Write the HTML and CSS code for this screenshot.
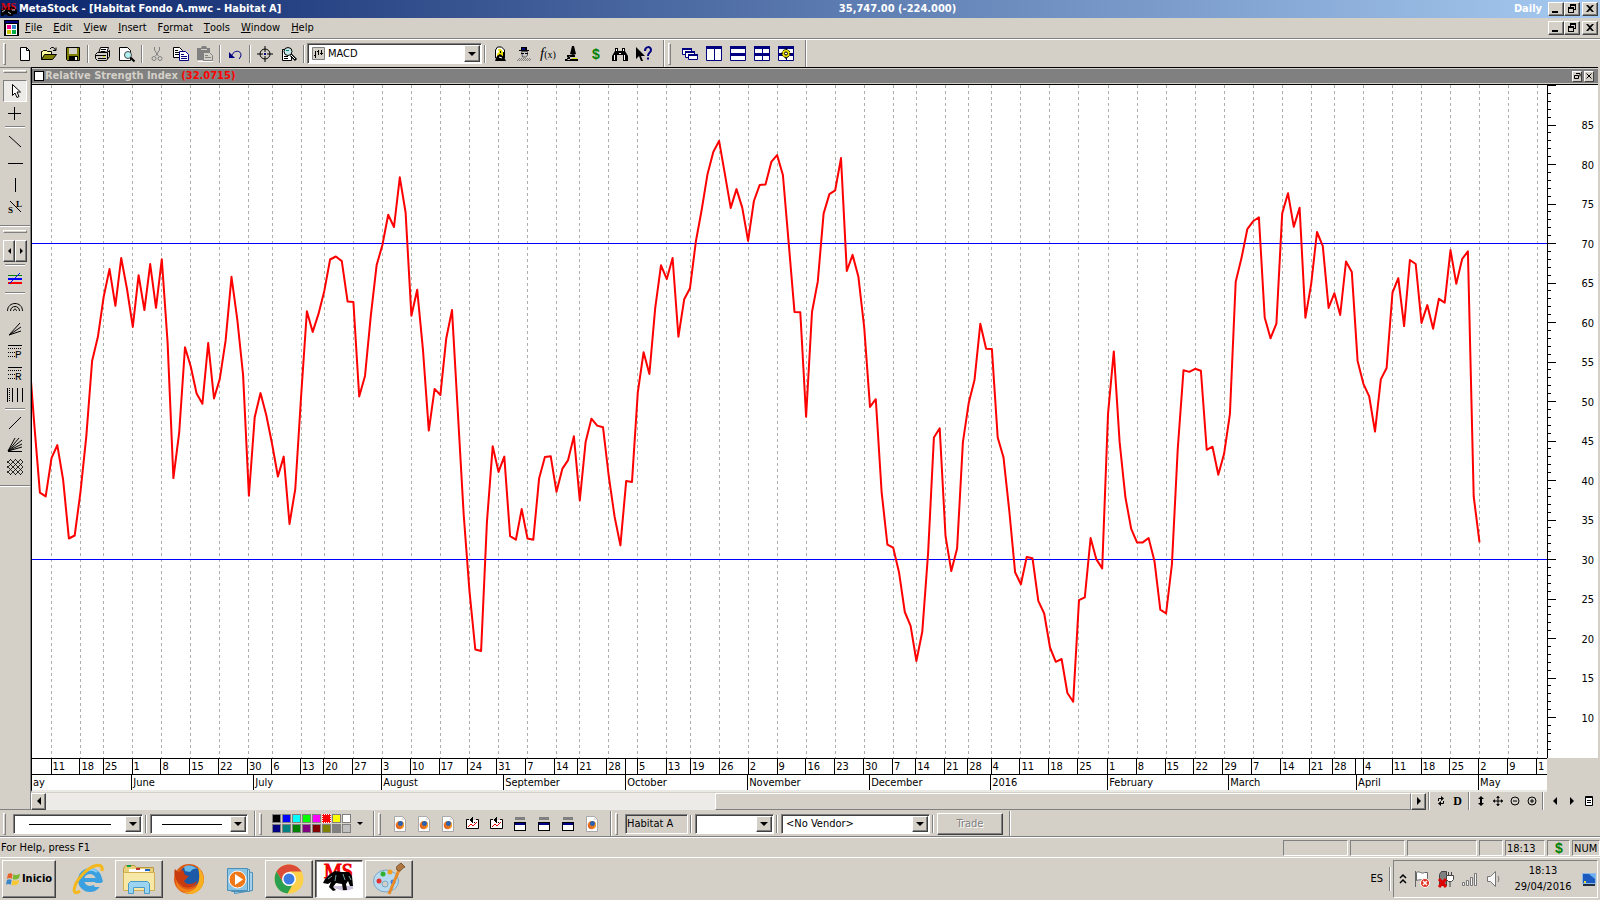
FILE: index.html
```html
<!DOCTYPE html>
<html lang="en">
<head>
<meta charset="utf-8">
<title>MetaStock - [Habitat Fondo A.mwc - Habitat A]</title>
<link rel="stylesheet" href="styles.css">
</head>
<body>
<svg class="defs" aria-hidden="true">
  <symbol id="i-min" viewBox="0 0 12 10"><path fill="#000" d="M2 7h6v2H2z"/></symbol>
  <symbol id="i-restore" viewBox="0 0 12 10"><path fill="#000" fill-rule="evenodd" d="M4 0h6v6H8v3H2V3h2zM5 2v1h3v2h1V2zM3 5v3h4V5z"/></symbol>
  <symbol id="i-close" viewBox="0 0 12 10"><path fill="#000" d="M2 1h2l2 2 2-2h2L7 4.500l3 3.500H8L6 6 4 8H2l3-3.500z"/></symbol>
  <symbol id="i-fox" viewBox="0 0 16 16"><path fill="#fff" stroke="#a8a8a8" d="M2.500.5h8l3 3v12h-11z"/><path fill="#ddd" d="M10 1l3 3h-3z"/><circle cx="8" cy="9" r="4" fill="#e8701a"/><circle cx="8.500" cy="7.500" r="2.500" fill="#2a62b0"/><path fill="#f8b030" d="M11 6c2 3 0 7-3 7 2-1 3-3 3-7z"/><path fill="#c8361a" d="M4 7c0 4 2 6 5 6-3 1-6-2-5-6z"/></symbol>
  <symbol id="i-chart" viewBox="0 0 16 16"><path fill="#fff" d="M3 4h11v9H3z"/><path fill="none" stroke="#000" d="M5 3.500H2.500v9h12v-9H12"/><path fill="none" stroke="#e00000" d="M4 11l3-3 2 2 4-4"/><path fill="#000" d="M8 1h1v6H8zM6 3h1v2H6zM7 2h1v4H7zM10 6h1v1h-1z"/></symbol>
  <symbol id="i-win" viewBox="0 0 16 16"><path fill="#808080" d="M3 1h10v3H3z"/><path fill="#d4d0c8" d="M4 4h8v2H4z"/><path fill="#000" d="M2 6h12v9H2z"/><path fill="#000080" d="M3 7h10v2H3z"/><path fill="#fff" d="M3 9h10v5H3z"/></symbol>
</svg>

<div class="app">
  <header class="titlebar">
    <div class="caption">
      <svg class="ms-small" viewBox="0 0 18 16" aria-hidden="true"><path d="M1 9l4-3 8 0 4 3v4h-3l-2 2H8l-2-2-3 2H1z" fill="#000"/><text x="1" y="9" class="ms-mark-s">MS</text><path d="M2 11l3-2M8 11l3 2M12 9h3" stroke="#c8c8d8"/></svg>
      <span>MetaStock - [Habitat Fondo A.mwc - Habitat A]</span>
    </div>
    <span class="quote">35,747.00 (-224.000)</span>
    <div class="caption-end">
      <span class="period">Daily</span>
      <div class="winbtns">
        <button class="wb" aria-label="Minimize"><svg><use href="#i-min"/></svg></button><button class="wb" aria-label="Restore"><svg><use href="#i-restore"/></svg></button><button class="wb wb-close" aria-label="Close"><svg><use href="#i-close"/></svg></button>
      </div>
    </div>
  </header>

  <nav class="menubar">
    <svg class="doc-icon" viewBox="0 0 15 16" aria-hidden="true"><path d="M0 0h15v16H0z" fill="#000"/><path d="M1 1h13v2H1z" fill="#000080"/><path d="M2 4h11v11H2z" fill="#fff"/><path d="M3 5h4v4H3z" fill="#f08"/><path d="M8 5h4v4H8z" fill="#38c"/><path d="M3 10h4v4H3z" fill="#c8c800"/><path d="M8 10h4v4H8z" fill="#0a4"/></svg>
    <button class="menu"><u>F</u>ile</button><button class="menu"><u>E</u>dit</button><button class="menu"><u>V</u>iew</button><button class="menu"><u>I</u>nsert</button><button class="menu">F<u>o</u>rmat</button><button class="menu"><u>T</u>ools</button><button class="menu"><u>W</u>indow</button><button class="menu"><u>H</u>elp</button>
    <div class="winbtns push">
      <button class="wb" aria-label="Minimize document"><svg><use href="#i-min"/></svg></button><button class="wb" aria-label="Restore document"><svg><use href="#i-restore"/></svg></button><button class="wb wb-close" aria-label="Close document"><svg><use href="#i-close"/></svg></button>
    </div>
  </nav>

  <div class="toolbar">
    <div class="bar">
      <i class="grip"></i>
      <button class="tb" aria-label="New"><svg viewBox="0 0 16 16"><path fill="#fff" stroke="#000" d="M3.500 1.500h6l3 3v10h-9z"/><path fill="none" stroke="#000" d="M9.500 1.500v3h3"/></svg></button>
      <button class="tb" aria-label="Open"><svg viewBox="0 0 16 16"><path fill="#ffffa0" stroke="#000" d="M.5 13.500v-8h1l1-1h3l1 1h4v3"/><path fill="#808000" stroke="#000" d="M.5 13.500l3-5h12l-4 5z"/><path fill="none" stroke="#000" d="M9 3l1.500-1.500h2L14.500 4M15 1.500v3h-3"/></svg></button>
      <button class="tb" aria-label="Save"><svg viewBox="0 0 16 16"><path fill="#808000" stroke="#000" d="M1.500 1.500h13v13h-12l-1-1z"/><path fill="#d4d0c8" d="M4 2h8v6H4z"/><path fill="#000" d="M4 10h9v4H4z"/><path fill="#fff" d="M10 11h2v3h-2z"/></svg></button>
      <i class="sep"></i>
      <button class="tb" aria-label="Print"><svg viewBox="0 0 16 16"><path fill="#fff" stroke="#000" d="M3.500 7.500l2-6h8l-2 6"/><path fill="#d4d0c8" stroke="#000" d="M.5 8.500l2-2h10l2-2v6l-3 4h-9l-2-2z"/><path stroke="#000" d="M6 3.500h5M5.500 5.500h5M1 9.500h10M3 12.500h8M12.500 7v6"/><path stroke="#dd0" d="M8 10.500h2"/></svg></button>
      <button class="tb" aria-label="Print preview"><svg viewBox="0 0 16 16"><path fill="#fff" stroke="#000" d="M.5 1.500h8l3 3v10H.5z"/><circle cx="9" cy="9" r="3.500" fill="#b0f0f0" stroke="#444"/><path stroke="#000" stroke-width="2" d="M11.500 11.500l4 4"/></svg></button>
      <i class="sep"></i>
      <button class="tb" aria-label="Cut"><svg viewBox="0 0 16 16"><g fill="none" stroke="#808080"><path d="M5.500 1v3l4 6M10.500 1v3l-4 6"/><circle cx="5" cy="12.500" r="2"/><circle cx="11" cy="12.500" r="2"/></g></svg></button>
      <button class="tb" aria-label="Copy"><svg viewBox="0 0 16 16"><path fill="#fff" stroke="#000" d="M.5 1.500h6l3 3v7h-9z"/><path stroke="#000" d="M2 4.500h3M2 6.500h5M2 8.500h5"/><path fill="#fff" stroke="#000080" d="M6.500 5.500h6l3 3v6h-9z"/><path stroke="#000080" d="M8 8.500h3M8 10.500h6M8 12.500h6"/></svg></button>
      <button class="tb" aria-label="Paste"><svg viewBox="0 0 16 16"><path fill="#808080" d="M0 2h4l1-2h4l1 2h3v12H0z"/><path stroke="#d4d0c8" d="M4 3.500h6"/><path fill="#d4d0c8" stroke="#808080" d="M6.500 6.500h6l3 3v5h-9z"/><path stroke="#808080" d="M8 9.500h3M8 11.500h6"/><path stroke="#fff" d="M1 15.500h15"/></svg></button>
      <i class="sep"></i>
      <button class="tb" aria-label="Undo"><svg viewBox="0 0 16 16"><path fill="#000080" d="M2 6v6h6z"/><path fill="none" stroke="#000080" d="M5 9c2-5 9-5 9 0 0 1-1 3-2 4"/></svg></button>
      <i class="sep"></i>
      <button class="tb" aria-label="Crosshair"><svg viewBox="0 0 16 16"><circle cx="8" cy="8" r="5" fill="none" stroke="#000"/><path stroke="#000" d="M8 0v6M8 10v6M0 8h6M10 8h6"/><path fill="#000080" d="M7 7h2v2H7z"/></svg></button>
      <button class="tb" aria-label="Zoom"><svg viewBox="0 0 16 16"><path fill="#fff" stroke="#000" d="M1.500 3.500h9v11h-9z"/><path stroke="#000" d="M3 10.500h4M3 12.500h4"/><circle cx="7" cy="5.500" r="4" fill="#c8e8e8" stroke="#000"/><path stroke="#088" d="M5 4.500h3"/><path stroke="#000" stroke-width="3" d="M10 9l5 5"/><path stroke="#fff" d="M10 9l4 4"/></svg></button>
      <i class="sep"></i>
      <div class="combo combo-ind">
        <svg class="ind-icon" viewBox="0 0 13 13" aria-hidden="true"><path fill="#d4d0c8" stroke="#808080" d="M.5.5h12v12H.5z"/><path stroke="#000" d="M3.500 4v7M2 8.500h2M6.500 3v5M5 4.500h2M9.500 3v5M8 6.500h3"/></svg>
        <select aria-label="Indicator"><option>MACD</option></select><span class="arrow"></span>
      </div>
      <i class="sep"></i>
      <button class="tb" aria-label="Expert advisor"><svg viewBox="0 0 16 16"><path fill="#fff" stroke="#000" d="M3.500 12V4l2-3h4l3 3v8z"/><path fill="#e8e000" d="M6 3h3l2 3v5H5V8l2-2z"/><path fill="#000" d="M8 5h1v2H8zM5 10l3-2 4 3 2 4H3zM11 6h2v6h-2z"/><path stroke="#fff" d="M7 11l3 1"/></svg></button>
      <button class="tb" aria-label="Explorer"><svg viewBox="0 0 16 16"><path fill="#000" d="M5 1h6v3h2v1H3V4h2z"/><path fill="#000080" d="M6 2h3v2H6z"/><path fill="#c8c8c8" stroke="#555" d="M5.500 5.500h6v4l-2 1.500h-3z"/><path stroke="#000" d="M5 7.500h3M9 7.500h3"/><path stroke="#808080" stroke-dasharray="1 1" d="M3 12.500h11M2 13.500h13M1 14.500h14"/></svg></button>
      <button class="tb" aria-label="Indicator builder"><span class="fx">f<small>(x)</small></span></button>
      <button class="tb" aria-label="System tester"><svg viewBox="0 0 16 16"><path fill="#000" d="M8 0h2l2 8-3 1-3-1zM3 9h8v2H3zM1 13h13v2H1zM6 10c-2 1-2 2-3 4h3z"/><path stroke="#dd0" d="M8 12.500h5"/><path stroke="#000" d="M2 15l3-5"/></svg></button>
      <button class="tb" aria-label="Quotes"><b class="dollar">$</b></button>
      <button class="tb" aria-label="Find"><svg viewBox="0 0 16 16"><path fill="#000" d="M3 2h3v3h4V2h3v3l3 5v5h-5V9H5v6H0v-5l3-5z"/><path stroke="#fff" d="M4.500 3v2M11.500 3v2M2.500 9v5M12.500 9v5M7 7.500h2"/></svg></button>
      <button class="tb" aria-label="Context help"><svg viewBox="0 0 16 16"><path fill="#000" d="M0 1v12l3-3 2 5h2L5 10h4z"/><path fill="none" stroke="#000080" stroke-width="2" d="M9 5c0-5 6-5 6-1 0 3-3 2-3 6M12 11.500v2"/></svg></button>
      <i class="bar-end"></i>
    </div>
    <div class="bar">
      <i class="grip"></i>
      <button class="tb" aria-label="Cascade"><svg viewBox="0 0 16 16"><g fill="#fff" stroke="#000080"><path d="M.5 2.500h9v6h-9z"/><path stroke-width="2" d="M0 3h10"/><path d="M3.500 5.500h9v6h-9z"/><path stroke-width="2" d="M3 6h10"/><path d="M6.500 8.500h9v5h-9z"/><path stroke-width="2" d="M6 9h10"/></g></svg></button>
      <button class="tb" aria-label="Tile columns"><svg viewBox="0 0 16 16"><path fill="#fff" stroke="#000080" d="M.5.5h15v14H.5zM8.500 1v14"/><path fill="#000080" d="M0 0h16v3H0z"/></svg></button>
      <button class="tb" aria-label="Tile rows"><svg viewBox="0 0 16 16"><path fill="#fff" stroke="#000080" d="M.5.5h15v14H.5z"/><path fill="#000080" d="M0 0h16v3H0zM0 7h16v3H0z"/></svg></button>
      <button class="tb" aria-label="Tile grid"><svg viewBox="0 0 16 16"><path fill="#fff" stroke="#000080" d="M.5.5h15v14H.5zM8.500 1v14"/><path fill="#000080" d="M0 0h16v3H0zM0 7h16v3H0z"/></svg></button>
      <button class="tb" aria-label="Layout settings"><svg viewBox="0 0 16 16"><path fill="#fff" stroke="#000080" d="M.5.5h15v14H.5zM8.500 1v14"/><path fill="#000080" d="M0 0h16v3H0zM0 7h16v3H0z"/><circle cx="8" cy="7.500" r="4" fill="#e8e000" stroke="#000" stroke-dasharray="2 1"/><path stroke="#000" d="M8 2v2M8 11v2M2.500 7.500h2M11.500 7.500h2"/><circle cx="8" cy="7.500" r="1.500" fill="#fff" stroke="#000"/></svg></button>
      <i class="bar-end"></i>
    </div>
  </div>

  <main class="work">
    <aside class="tools">
      <div class="vbar">
        <i class="vgrip"></i>
        <button class="vt pressed" aria-label="Pointer"><svg viewBox="0 0 16 16"><path fill="#fff" stroke="#000" d="M5.500 1.500v11l2.500-2.500 2 4.500 2-1-2-4.500h3.500z"/></svg></button>
        <button class="vt" aria-label="Crosshair tool"><svg viewBox="0 0 16 16"><path stroke="#000" d="M1 8.500h13M7.500 2v13"/></svg></button>
        <i class="vsep"></i>
        <button class="vt" aria-label="Trendline"><svg viewBox="0 0 16 16"><path stroke="#000" d="M2 3l12 11"/></svg></button>
        <button class="vt" aria-label="Horizontal line"><svg viewBox="0 0 16 16"><path stroke="#000" d="M1 8.500h15"/></svg></button>
        <button class="vt" aria-label="Vertical line"><svg viewBox="0 0 16 16"><path stroke="#000" d="M8.500 1v14"/></svg></button>
        <button class="vt" aria-label="Speed lines"><svg viewBox="0 0 16 16"><path stroke="#000" d="M3 2l11 11"/><text class="glyph-sm" x="1" y="14">S</text><text class="glyph-sm" x="9" y="8">L</text></svg></button>
      </div>
      <div class="vbar">
        <i class="vgrip"></i>
        <div class="spin"><button aria-label="Previous"><i class="tri-l"></i></button><button aria-label="Next"><i class="tri-r"></i></button></div>
        <i class="vsep"></i>
        <button class="vt" aria-label="Regression channel"><svg viewBox="0 0 16 16"><path stroke="#008000" d="M1 4.500h14"/><path stroke="#00f" stroke-width="2" d="M1 8h14"/><path stroke="#f00" stroke-width="2" d="M1 12h14"/><path stroke="#00f" d="M2 13L13 2"/></svg></button>
        <i class="vsep"></i>
        <button class="vt" aria-label="Fibonacci arcs"><svg viewBox="0 0 16 16"><g fill="none" stroke="#000"><path d="M.5 12c0-10 15-10 15 0"/><path d="M3.500 12c0-6 9-6 9 0"/><path d="M6.500 12c0-2.500 3-2.500 3 0"/></g></svg></button>
        <button class="vt" aria-label="Fibonacci fan"><svg viewBox="0 0 16 16"><path stroke="#000" d="M2 14L13 2M2 14L14 6M2 14l12-4"/></svg></button>
        <button class="vt" aria-label="Fibonacci projection"><svg viewBox="0 0 16 16"><path stroke="#000" d="M1 2.500h14"/><path stroke="#000" stroke-dasharray="1 1" d="M1 5.500h14M1 9.500h7M1 13.500h7"/><text class="glyph" x="8" y="15">P</text></svg></button>
        <button class="vt" aria-label="Fibonacci retracement"><svg viewBox="0 0 16 16"><path stroke="#000" d="M1 2.500h14"/><path stroke="#000" stroke-dasharray="1 1" d="M1 5.500h14M1 9.500h7M1 13.500h7"/><text class="glyph" x="8" y="15">R</text></svg></button>
        <button class="vt" aria-label="Fibonacci time zones"><svg viewBox="0 0 16 16"><path stroke="#000" d="M.5 1v14M5.500 1v14M10.500 1v14M15.500 1v14"/><path stroke="#000" stroke-dasharray="1 1" d="M2.500 1v14"/></svg></button>
        <i class="vsep"></i>
        <button class="vt" aria-label="Gann line"><svg viewBox="0 0 16 16"><path stroke="#000" d="M2 14L14 2"/></svg></button>
        <button class="vt" aria-label="Gann fan"><svg viewBox="0 0 16 16"><path stroke="#000" d="M1 14L8 1M1 14L12 1M1 14L15 3M1 14L15 7M1 14l14-4M1 14.500h14"/></svg></button>
        <button class="vt" aria-label="Gann grid"><svg viewBox="0 0 16 16"><path stroke="#000" stroke-width=".8" d="M0 4l4-4M0 9l9-9M0 14L14 0M3 16L16 3M8 16l8-8M13 16l3-3M0 12l4 4M0 7l9 9M0 2l14 14M3 0l13 13M8 0l8 8M13 0l3 3"/></svg></button>
      </div>
    </aside>

    <section class="chartwin">
      <header class="chart-title">
        <i class="sysbox"></i><h1>Relative Strength Index <span>(32.0715)</span></h1>
        <div class="mini-btns"><button aria-label="Restore pane"><svg viewBox="0 0 8 8"><path fill="none" stroke="#000" d="M1.500 3.500h4v3h-4zM3 1.500h4v3"/></svg></button><button aria-label="Close pane"><svg viewBox="0 0 8 8"><path stroke="#000" d="M1.500 1.500l5 5M6.500 1.500l-5 5"/></svg></button></div>
      </header>
      <div class="chart">
        <svg class="plot" id="plot" viewBox="32 85 1515 673" preserveAspectRatio="none" role="img" aria-label="Relative Strength Index"></svg>
        <div class="yaxis">
          <svg class="yticks" id="yticks" viewBox="0 85 10 673" preserveAspectRatio="none" aria-hidden="true"></svg>
          <div class="ylabels" id="ylabels"></div>
        </div>
        <div class="xaxis">
          <div class="weeks" id="weeks"></div>
          <div class="months" id="months"></div>
        </div>
      </div>
      <div class="scrollrow">
        <button class="sb" aria-label="Scroll left"><i class="tri-l"></i></button>
        <div class="track"><div class="thumb"></div></div>
        <button class="sb" aria-label="Scroll right"><i class="tri-r"></i></button>
        <i class="sep"></i>
        <button class="nb" aria-label="Refresh"><svg viewBox="0 0 12 12"><path fill="none" stroke="#000" d="M3.500 6V3.500H7M8.500 6v2.500H5"/><path fill="#000" d="M6 1l3 2.500L6 6zM6 6v5L3 8.500z"/></svg></button>
        <button class="nb serif">D</button>
        <i class="sep"></i>
        <button class="nb" aria-label="Rescale"><svg viewBox="0 0 12 12"><path fill="#000" d="M6 1l3 3H7v4h2l-3 3-3-3h2V4H3z"/></svg></button>
        <button class="nb" aria-label="Move"><svg viewBox="0 0 12 12"><path stroke="#000" d="M6 1v10M1 6h10"/><path fill="#000" d="M6 1l2 2H4zM6 11l2-2H4zM1 6l2-2v4zM11 6L9 4v4z"/></svg></button>
        <button class="nb" aria-label="Zoom out"><svg viewBox="0 0 12 12"><circle cx="6" cy="6" r="4" fill="none" stroke="#000"/><path stroke="#000" d="M4 6h4"/></svg></button>
        <button class="nb" aria-label="Zoom in"><svg viewBox="0 0 12 12"><circle cx="6" cy="6" r="4" fill="none" stroke="#000"/><path stroke="#000" d="M4 6h4M6 4v4"/></svg></button>
        <i class="sep"></i>
        <button class="nb" aria-label="Previous security"><svg viewBox="0 0 12 12"><path fill="#000" d="M8 2v8L4 6z"/></svg></button>
        <button class="nb" aria-label="Next security"><svg viewBox="0 0 12 12"><path fill="#000" d="M4 2v8l4-4z"/></svg></button>
        <button class="nb" aria-label="Choose security"><svg viewBox="0 0 12 12"><path fill="#fff" stroke="#000" d="M2.500 1.500h7v9h-7z"/><path stroke="#000" d="M2 2.500h8M4 5.500h4M4 7.500h4"/></svg></button>
      </div>
    </section>
  </main>

  <div class="toolbar lower">
    <div class="bar"><i class="grip"></i>
      <div class="combo line-a"><select aria-label="Line style"><option></option></select><span class="arrow"></span></div>
      <i class="sep"></i>
      <div class="combo line-b"><select aria-label="Line weight"><option></option></select><span class="arrow"></span></div>
      <i class="bar-end"></i></div>
    <div class="bar"><i class="grip"></i>
      <div class="palette" id="palette"></div>
      <button class="drop" aria-label="More colors"><i class="tri-d"></i></button>
      <i class="bar-end"></i></div>
    <div class="bar"><i class="grip"></i>
      <button class="tb" aria-label="Link 1"><svg><use href="#i-fox"/></svg></button>
      <button class="tb" aria-label="Link 2"><svg><use href="#i-fox"/></svg></button>
      <button class="tb" aria-label="Link 3"><svg><use href="#i-fox"/></svg></button>
      <button class="tb" aria-label="Chart 1"><svg><use href="#i-chart"/></svg></button>
      <button class="tb" aria-label="Chart 2"><svg><use href="#i-chart"/></svg></button>
      <button class="tb" aria-label="Window 1"><svg><use href="#i-win"/></svg></button>
      <button class="tb" aria-label="Window 2"><svg><use href="#i-win"/></svg></button>
      <button class="tb" aria-label="Window 3"><svg><use href="#i-win"/></svg></button>
      <button class="tb" aria-label="Link 4"><svg><use href="#i-fox"/></svg></button>
      <i class="bar-end"></i></div>
    <div class="bar"><i class="grip"></i>
      <input class="symbol" aria-label="Symbol" value="Habitat A" readonly>
      <i class="sep"></i>
      <div class="combo acct"><select aria-label="Account"><option></option></select><span class="arrow"></span></div>
      <i class="sep"></i>
      <div class="combo vendor"><select aria-label="Vendor"><option>&lt;No Vendor&gt;</option></select><span class="arrow"></span></div>
      <i class="sep"></i>
      <button class="trade" disabled>Trade</button>
      <i class="bar-end"></i></div>
  </div>

  <footer class="status">
    <span class="help">For Help, press F1</span>
    <i class="cell c1"></i><i class="cell c2"></i><i class="cell c3"></i><i class="cell c4"></i>
    <span class="cell c5">18:13</span><span class="cell c6"><b class="dollar">$</b></span><span class="cell c7">NUM</span>
  </footer>

  <div class="taskbar">
    <button class="start"><svg viewBox="0 0 16 16" aria-hidden="true"><path fill="#e8602a" d="M2 3c2-2 4-1 5 0L6 8C4 6 3 7 1 8z"/><path fill="#7ab832" d="M8 3c2 1 4 1 7-1l-1 5c-3 2-5 2-7 1z"/><path fill="#3a86c8" d="M1 9c2-1 3-1 5 0l-1 5c-2-1-3-1-5 0z"/><path fill="#f8c830" d="M7 9c2 1 4 1 7 0l-1 4c-3 2-5 2-7 1z"/></svg>Inicio</button>
    <button class="task flat" aria-label="Internet Explorer"><svg viewBox="0 0 32 32"><circle cx="17" cy="17" r="9" fill="none" stroke="#3aa0e0" stroke-width="6"/><path fill="#d4d0c8" d="M19 20h13v4H22z"/><path fill="#3aa0e0" d="M9 15h20l1 4H9z"/><path fill="none" stroke="#8ad0f8" stroke-width="2" d="M9 12c3-5 10-7 15-3"/><path fill="none" stroke="#f4b81c" stroke-width="3" d="M7 28C-2 34 0 22 9 12S31-2 29 8"/></svg></button>
    <button class="task" aria-label="Explorer"><svg viewBox="0 0 32 32"><path fill="#e8cf78" stroke="#b89a40" d="M.5 5.500l2-3h9l2 2h17v22H.5z"/><path fill="#fff" d="M6 6h20v6H6z"/><path fill="#10a040" d="M4 2h4v2H4z"/><path fill="#c03030" d="M13 5h4v2h-4z"/><path fill="#2060c0" d="M22 6h5v2h-5z"/><path fill="#f8e8a8" stroke="#d0b050" d="M.5 9.500h31v18H.5z"/><path fill="#9ad4f0" stroke="#4a9ac8" d="M5.500 30.500v-10l2-2h17l2 2v10h-5v-6h-11v6z"/></svg></button>
    <button class="task flat" aria-label="Firefox"><svg viewBox="0 0 32 32"><circle cx="16" cy="16" r="15" fill="#e05a14"/><circle cx="17" cy="13" r="10.500" fill="#1c5aa8"/><path fill="#68b8e8" d="M11 4c5-3 10-1 13 2-4-1-5 1-7 3l-5-1z"/><path fill="#c83a10" d="M2 6l3 3 5-2 2 5 4 1-5 5c3 5 9 3 13 0-2 7-12 9-17 3C3 18 0 11 2 6z"/><path fill="#f8b020" d="M25 4c8 8 8 19-1 25-4 3-10 2-13 0 12 1 18-9 14-25z"/><path fill="#f08018" d="M3 17c3 9 12 12 20 7-4 7-20 9-20-7z"/></svg></button>
    <button class="task flat" aria-label="Media Player"><svg viewBox="0 0 32 32"><path fill="#a8d0e8" stroke="#4a90b8" d="M11.500 7.500l18 2v18l-18 3z"/><path fill="#b8dcf0" stroke="#4a90b8" d="M8.500 5.500l18 1v22h-18z"/><path fill="#8cc4e4" stroke="#4a90b8" d="M4.500 5.500h20v22h-20z"/><circle cx="14.500" cy="16.500" r="8.500" fill="#f07818" stroke="#fff"/><path fill="#fff" d="M12 11v11l8-5.500z"/></svg></button>
    <button class="task" aria-label="Chrome"><svg viewBox="0 0 32 32"><circle cx="16" cy="16" r="14.500" fill="#fcd04a"/><path fill="#dc4a38" d="M3.500 8.500C9-1 23-1 28.500 8.500H16L10 20z"/><path fill="#2aa050" d="M3.500 8.500L10 19.500c2 3 6 4 9 3L14.500 30.500C3 29-1 17 3.500 8.500z"/><circle cx="16" cy="16" r="7" fill="#fff"/><circle cx="16" cy="16" r="5.500" fill="#3c7ce0"/></svg></button>
    <button class="task active" aria-label="MetaStock"><svg viewBox="0 0 32 32"><text x="1" y="15" class="ms-mark">MS</text><path fill="#c8c0d8" d="M5 23h25v3l-9 2-7-2z"/><path fill="#000" d="M2 16l5-5 5-3 7 1 7 0 3 4 1 10h-3l-2-5-2 3 1 6h-4l-1-6-6-1-3 4 3 3-3 1-4-4 2-5-3 2-5-1z"/><path fill="none" stroke="#70a0a0" d="M5 16l4-3M13 12l-1 6M20 11l2 6M26 13l2 4"/></svg></button>
    <button class="task" aria-label="Paint"><svg viewBox="0 0 32 32"><ellipse cx="13" cy="18" rx="12.500" ry="11" fill="#b8daf0" stroke="#78a8c8"/><circle cx="12" cy="21" r="3" fill="#d4d0c8" stroke="#78a8c8"/><circle cx="6" cy="18" r="2.500" fill="#e03030"/><circle cx="10" cy="11" r="2.500" fill="#30b030"/><circle cx="17" cy="9" r="2.500" fill="#f0a020"/><circle cx="20" cy="19" r="2.500" fill="#4080e0"/><path stroke="#e88a28" stroke-width="3" d="M16 31L26 7"/><path fill="#b07840" stroke="#7a5028" d="M24 7c-2-4 2-5 4-7l4 4c-4 1-3 6-8 3z"/></svg></button>
    <div class="tray-side">
      <span class="lang">ES</span><i class="sep"></i>
      <div class="tray">
        <svg class="chev" viewBox="0 0 8 12" aria-hidden="true"><path fill="none" stroke="#000" stroke-width="1.500" d="M1 5l3-3 3 3M1 10l3-3 3 3"/></svg>
        <svg viewBox="0 0 18 18" aria-hidden="true"><path fill="#fff" stroke="#666" d="M2.500 1v16M3.500 2.500c3-2 5 2 8 0l3 0v8c-4 1-6-2-11 0z"/><circle cx="12" cy="13" r="4.500" fill="#e03020" stroke="#fff"/><path stroke="#fff" stroke-width="1.500" d="M10 11l4 4M14 11l-4 4"/></svg>
        <svg viewBox="0 0 18 18" aria-hidden="true"><path fill="#808080" stroke="#444" d="M2.500 4.500l2-3h5v14h-7z"/><path fill="#fff" stroke="#444" d="M9.500 5.500h7v4l-2 2h-3l-2-2zM11.500 2v4M14.500 2v4M13 11v6"/><path stroke="#e00000" stroke-width="3" d="M2 9l7 8M9 9l-7 8"/></svg>
        <svg viewBox="0 0 18 18" aria-hidden="true"><path fill="#f8f8f8" stroke="#777" d="M1.500 12.500h2v3h-2zM5.500 10.500h2v5h-2zM9.500 7.500h2v8h-2zM13.500 3.500h2v12h-2z"/></svg>
        <svg viewBox="0 0 18 18" aria-hidden="true"><path fill="#f8f8f8" stroke="#777" d="M2.500 6.500h3l5-5v15l-5-5h-3z"/><path fill="none" stroke="#777" d="M13 6c1 2 1 4 0 6"/></svg>
        <div class="clock"><span>18:13</span><span>29/04/2016</span></div>
        <svg class="monitor" viewBox="0 0 14 16" aria-hidden="true"><path fill="#1c5ac0" stroke="#8ab8e8" d="M.5 2.500h13v10H.5z"/><path fill="#6ab0f0" d="M7 3h6v5z"/><path fill="#203040" d="M1 13h12v2H1z"/><path fill="#e8d840" d="M2 10h2v2H2z"/></svg>
      </div>
    </div>
  </div>
</div>
<script src="chart.js"></script>
</body>
</html>
```
FILE: styles.css
```css
:root {
  --face: #d4d0c8;
  --shadow: #808080;
  --dark: #404040;
}
* { box-sizing: border-box; }
body {
  margin: 0;
  background: var(--face);
  color: #000;
  font: 11px/14px "DejaVu Sans Condensed", "Noto Sans", sans-serif;
}
button, select, input { font: inherit; color: inherit; padding: 0; margin: 0; border: 0; border-radius: 0; background: none; }
button { display: flex; align-items: center; justify-content: center; flex: none; }
svg { display: block; flex: none; overflow: visible; }
.defs { position: absolute; width: 0; height: 0; overflow: hidden; }
.app { display: flex; flex-direction: column; min-height: 100vh; }

/* caption and menu */
.titlebar {
  display: flex; align-items: center; justify-content: space-between;
  height: 18px; padding-right: 2px;
  background: linear-gradient(90deg, #0a246a, #a6caf0);
  color: #fff; font-weight: bold; line-height: 16px;
}
.caption, .caption-end { display: flex; align-items: center; }
.caption { gap: 1px; }
.caption-end { gap: 6px; }
.ms-small { width: 18px; height: 16px; }
.ms-mark-s { font: bold 10px "Liberation Serif", serif; fill: #e00000; }
.winbtns { display: flex; }
.push { margin-left: auto; }
.wb {
  width: 16px; height: 14px; background: var(--face);
  border: 1px solid; border-color: #fff var(--dark) var(--dark) #fff;
  box-shadow: inset -1px -1px var(--shadow);
}
.wb svg { width: 12px; height: 10px; }
.wb-close { margin-left: 2px; }
.menubar {
  display: flex; align-items: center; gap: 1px; height: 21px; padding: 0 2px 0 4px;
  border-bottom: 1px solid var(--shadow);
}
.doc-icon { width: 15px; height: 16px; }
.menu { padding: 0 5px; }

/* toolbars */
.toolbar { display: flex; height: 28px; border-top: 1px solid #fff; }
.bar { display: flex; align-items: center; }
.grip {
  flex: none; width: 3px; height: 22px; margin: 0 7px 0 3px;
  border: 1px solid; border-color: #fff var(--shadow) var(--shadow) #fff;
}
.bar-end { width: 2px; align-self: stretch; margin-left: 7px; border-left: 1px solid var(--shadow); border-right: 1px solid #fff; }
.sep { width: 2px; height: 18px; margin: 0 2px; flex: none; border-left: 1px solid var(--shadow); border-right: 1px solid #fff; }
.tb { width: 24px; height: 22px; }
.tb svg { width: 16px; height: 16px; }
.fx { font: italic 15px/14px "Liberation Serif", serif; }
.fx small { font-size: 10px; font-style: normal; }
.dollar { color: #008000; font: bold 14px/14px "Liberation Sans", sans-serif; }
.combo {
  display: flex; align-items: stretch; height: 21px; background: #fff; padding: 1px;
  border: 1px solid; border-color: var(--shadow) #fff #fff var(--shadow);
  box-shadow: inset 1px 1px var(--dark);
}
.combo select { appearance: none; flex: 1; min-width: 0; padding-left: 3px; outline: 0; }
.arrow {
  width: 16px; display: flex; flex: none; align-items: center; justify-content: center; background: var(--face);
  border: 1px solid; border-color: #fff var(--dark) var(--dark) #fff;
  box-shadow: inset -1px -1px var(--shadow);
}
.arrow::after, .tri-d { content: ""; border: 4px solid transparent; border-top-color: #000; border-bottom: 0; }
.tri-l { border: 4px solid transparent; border-right-color: #000; border-left: 0; }
.tri-r { border: 4px solid transparent; border-left-color: #000; border-right: 0; }
.combo-ind { width: 175px; }
.ind-icon { width: 13px; height: 13px; margin: 2px 0 0 3px; }

/* workspace */
.work { display: flex; flex: 1; min-height: 0; }
.tools { width: 31px; flex: none; border-right: 1px solid var(--shadow); border-top: 1px solid var(--shadow); border-bottom: 1px solid var(--shadow); }
.vbar { display: flex; flex-direction: column; padding: 2px 0 7px 3px; border-bottom: 1px solid var(--shadow); box-shadow: 0 1px #fff; }
.vgrip { width: 24px; height: 3px; margin-bottom: 7px; border: 1px solid; border-color: #fff var(--shadow) var(--shadow) #fff; }
.vbar + .vbar { padding-top: 4px; }
.vt { width: 24px; height: 22px; }
.vt svg { width: 16px; height: 16px; }
.glyph { font: 11px "Liberation Mono", monospace; }
.glyph-sm { font: bold 9px "Liberation Serif", serif; }
.pressed { background: #ecebe7; border: 1px solid; border-color: var(--shadow) #fff #fff var(--shadow); }
.vsep { width: 20px; height: 2px; margin: 2px; border-top: 1px solid var(--shadow); border-bottom: 1px solid #fff; }
.spin { display: flex; }
.spin button, .sb {
  width: 12px; height: 22px; background: var(--face);
  border: 1px solid; border-color: #fff var(--dark) var(--dark) #fff;
  box-shadow: inset -1px -1px var(--shadow);
}
.spin i { border-width: 3px; }
.spin .tri-l { border-left-width: 0; }
.spin .tri-r { border-right-width: 0; }
.chartwin { flex: 1; min-width: 0; display: flex; flex-direction: column; }
.chart-title {
  display: flex; align-items: center; gap: 1px; height: 18px; padding: 0 4px 0 2px; margin-right: 2px;
  border: solid #000; border-width: 1px 0 1px 1px;
  background: #808080; color: #d4d0c8; box-shadow: inset 0 1px var(--face), inset 0 -1px var(--face);
}
.sysbox { width: 10px; height: 10px; background: #fff; border: 1px solid #000; }
.chart-title h1 { margin: 0; font-size: 11px; line-height: 16px; font-weight: bold; }
.chart-title h1 span { color: #f00; }
.mini-btns { display: flex; gap: 2px; margin-left: auto; }
.mini-btns button { width: 10px; height: 11px; background: var(--face); border: 1px solid; border-color: #fff var(--dark) var(--dark) #fff; }
.mini-btns svg { width: 8px; height: 8px; }
.chart { flex: 1; min-height: 0; display: grid; grid-template: minmax(0, 1fr) 34px / minmax(0, 1fr) 53px; }
.plot { width: 100%; height: 100%; min-height: 0; background: #fff; border-left: 1px solid #000; overflow: hidden; }
.plot * , .yticks * { vector-effect: non-scaling-stroke; fill: none; }
.gridline { stroke: #a8b0a8; stroke-dasharray: 3 3; shape-rendering: crispEdges; }
.level { stroke: #00f; shape-rendering: crispEdges; }
.rsi { stroke: #f00; stroke-width: 2; stroke-linejoin: round; }
.yaxis { display: flex; background: #fff; border-left: 1px solid #000; margin-right: 2px; min-height: 0; }
.yticks { width: 10px; height: 100%; min-height: 0; overflow: hidden; }
.yticks path { stroke: #000; shape-rendering: crispEdges; }
.ylabels { flex: 1; display: flex; flex-direction: column; justify-content: space-between; align-items: flex-end; padding: 34px 4px 32px 0; }
.xaxis { background: #fff; border-left: 1px solid #000; border-bottom: 2px solid #ebe9e4; overflow: hidden; }
.weeks, .months { display: flex; height: 16px; border-top: 1px solid #000; line-height: 16px; }
.weeks span, .months span { flex: 1 1 0; min-width: 0; overflow: hidden; white-space: nowrap; padding-left: 1px; border-left: 1px solid #000; }
.weeks span:first-child, .months span:first-child { border-left: 0; }
.scrollrow { display: flex; align-items: center; height: 18px; padding-right: 3px; }
.sb { width: 15px; height: 17px; }
.track { flex: 1; height: 17px; background: #ecebe7; display: flex; justify-content: flex-end; }
.thumb { width: 51%; background: var(--face); border: 1px solid; border-color: #fff var(--shadow) var(--shadow) #fff; }
.nb { width: 17px; height: 17px; }
.nb svg { width: 12px; height: 12px; }
.serif { font: bold 12px/14px "Liberation Serif", serif; }

/* lower toolbar */
.lower { height: 27px; padding-top: 1px; border-top: 0; border-bottom: 1px solid var(--shadow); }
.lower .combo { height: 20px; }
.lower .bar-end { margin-left: 6px; }
.lower .sep { margin-right: 3px; }
.line-a { width: 130px; }
.line-b { width: 98px; }
.line-a select { background: linear-gradient(#000, #000) 14px 8px / 82px 1px no-repeat; }
.line-b select { background: linear-gradient(#000, #000) 10px 8px / 60px 1px no-repeat; }
.palette { display: grid; grid-template-columns: repeat(8, 9px); gap: 1px; margin: 0 1px 0 3px; }
.palette button { width: 9px; height: 9px; border: 1px solid #808080; }
.palette .on { border: 1px dotted #fff; }
.drop { width: 15px; height: 20px; }
.drop .tri-d { border-width: 3px; border-bottom: 0; }
.symbol { width: 63px; height: 20px; padding: 0 1px; border: 1px solid; border-color: var(--shadow) #fff #fff var(--shadow); box-shadow: inset 1px 1px var(--dark); }
.acct { width: 79px; }
.vendor { width: 149px; }
.trade {
  width: 66px; height: 22px; color: #808080; text-shadow: 1px 1px #fff;
  border: 1px solid; border-color: #fff var(--dark) var(--dark) #fff; box-shadow: inset -1px -1px var(--shadow);
}

/* status */
.status { display: flex; align-items: center; gap: 2px; height: 20px; padding-top: 1px; border-top: 1px solid #fff; }
.help { margin-right: auto; padding-left: 1px; line-height: 16px; }
.cell { height: 16px; padding-left: 1px; border: 1px solid; border-color: var(--shadow) #fff #fff var(--shadow); line-height: 15px; }
.c1 { width: 65px; }
.c2 { width: 55px; }
.c3 { width: 70px; }
.c4 { width: 24px; }
.c5 { width: 40px; }
.c6 { width: 23px; text-align: center; }
.c7 { width: 28px; }

/* taskbar */
.taskbar { display: flex; align-items: center; gap: 2px; height: 43px; padding: 0 2px; border-top: 1px solid #fff; }
.start, .task { height: 38px; border: 1px solid; border-color: #fff var(--dark) var(--dark) #fff; box-shadow: inset -1px -1px var(--shadow); }
.start { width: 54px; gap: 1px; margin-right: 7px; font-weight: bold; }
.start svg { width: 15px; height: 16px; }
.task { width: 48px; }
.task svg { width: 32px; height: 32px; }
.ms-mark { font: 20px "Liberation Serif", serif; fill: #f00000; stroke: #f00000; }
.flat { border-color: transparent; box-shadow: none; }
.active { background: #fff; border-color: var(--dark) #fff #fff var(--dark); box-shadow: inset 1px 1px var(--shadow); }
.tray-side { display: flex; align-items: center; margin-left: auto; }
.lang { margin-right: 4px; }
.tray-side .sep { height: 24px; }
.tray { display: flex; align-items: center; height: 38px; padding: 0 1px 0 5px; border: 1px solid; border-color: var(--shadow) #fff #fff var(--shadow); }
.tray svg { width: 18px; height: 18px; margin-left: 6px; }
.tray .chev { width: 8px; height: 12px; margin-left: 0; }
.tray .monitor { width: 14px; height: 16px; margin-left: 6px; }
.clock { display: flex; flex-direction: column; align-items: center; width: 66px; margin-left: 7px; line-height: 16px; }
```
FILE: chart.js
```js
// Week starts: position on the time scale and day of month. An empty label is a month break.
var weeks = [[51,'11'],[80,'18'],[103,'25'],[132,'1'],[161,'8'],[190,'15'],[219,'22'],[248,'30'],[272,'6'],[301,'13'],[324,'20'],[353,'27'],[382,'3'],[411,'10'],[440,'17'],[469,'24'],[498,'31'],[527,'7'],[556,'14'],[579,'21'],[608,'28'],[626,''],[637,'5'],[666,'13'],[690,'19'],[719,'26'],[748,'2'],[777,'9'],[806,'16'],[835,'23'],[864,'30'],[893,'7'],[916,'14'],[945,'21'],[968,'28'],[991,'4'],[1020,'11'],[1049,'18'],[1078,'25'],[1108,'1'],[1137,'8'],[1166,'15'],[1195,'22'],[1224,'29'],[1253,'7'],[1282,'14'],[1311,'21'],[1334,'28'],[1357,''],[1363,'4'],[1392,'11'],[1421,'18'],[1450,'25'],[1479,'2'],[1508,'9'],[1537,'1']];
var months = [[132,'June'],[254,'July'],[382,'August'],[504,'September'],[626,'October'],[748,'November'],[870,'December'],[991,'2016'],[1108,'February'],[1229,'March'],[1357,'April'],[1479,'May']];

// Daily readings, in drawing units below the top of the scale.
var runs = [
  { start: -4, unit: 2.613, y: [668,868,1052,1062,962,928,1018,1172,1164,1050,905,708,645,540,468,564,439,520,619,484,575,455,569,442,660,1014,895,672,723,793,820,661,806,755,655,488,600,745,1060,855,792,850,925,1010,958,1134,1042,800,578,632,585,525,443,435,447,553,554,801,747,590,458,405,326,358,228,320,590,522,680,890,781,797,650,575,840,1110,1310,1462,1466,1130,931,998,958,1166,1175,1095,1172,1175,1015,959,957,1050,990,967,905,1072,920,859,877,881,1010,1115,1190,1022,1024,790,685,742,570,458,494,439,645,547,518,395,313,220,162,133,220,308,259,308,394,290,248,247,188,170,222,400,580,581,854,580,500,323,272,262,178,473,431,488,620,828,808,1050,1188,1196,1260,1364,1400,1492,1415,1210,908,884,1165,1257,1198,920,818,758,611,676,677,908,960,1100,1260] },
  { start: 167, unit: 2.529, y: [1250,1181,1184,1292,1324,1410,1446,1439,1525,1547,1290,1283,1133,1187,1210,820,661,890,1030,1110,1144,1144,1133,1192,1314,1324,1200,910,709,713,705,710,910,902,973,920,820,485,425,352,332,322,575,628,591,312,261,346,298,576,490,359,395,551,514,569,434,460,685,743,775,864,732,703,512,476,597,430,440,589,544,604,528,538,405,490,428,408,1028,1144] }
];
var left = 32, right = 1547, dayWidth = 5.805, firstDay = 51.5;

function yOf(value) { return 243.5 + (70 - value) * 7.9; }

function svg(parent, name, attrs) {
  var el = document.createElementNS('http://www.w3.org/2000/svg', name);
  for (var key in attrs) el.setAttribute(key, attrs[key]);
  parent.appendChild(el);
}

function cells(id, list, first) {
  var row = document.getElementById(id);
  [[left, first]].concat(list).forEach(function (item, i) {
    var next = list[i] ? list[i][0] : right;
    var cell = document.createElement('span');
    cell.textContent = item[1];
    cell.style.flexGrow = next - item[0];
    row.appendChild(cell);
  });
}

var plot = document.getElementById('plot');
weeks.forEach(function (w) {
  if (w[1]) svg(plot, 'path', { 'class': 'gridline', d: 'M' + (w[0] + 0.5) + ' 85V758' });
});
[70, 30].forEach(function (v) {
  svg(plot, 'path', { 'class': 'level', d: 'M32 ' + yOf(v) + 'H1547' });
});
var points = [];
runs.forEach(function (run) {
  run.y.forEach(function (y, i) {
    points.push((firstDay + (run.start + i) * dayWidth).toFixed(1) + ',' + (90 + y / run.unit).toFixed(1));
  });
});
svg(plot, 'polyline', { 'class': 'rsi', points: points.join(' ') });

var ticks = document.getElementById('yticks'), d = 'M0 85.500h8';
for (var v = 6; v < 90; v++) d += 'M0 ' + yOf(v) + 'h' + (v % 5 ? 3 : 8);
svg(ticks, 'path', { d: d });
for (v = 85; v >= 10; v -= 5) {
  var label = document.createElement('span');
  label.textContent = v;
  document.getElementById('ylabels').appendChild(label);
}
cells('weeks', weeks, '');
cells('months', months, 'ay');

['#000', '#00f', '#0ff', '#0f0', '#f0f', '#f00', '#ff0', '#fff', '#000080', '#008080', '#008000', '#800080', '#800000', '#808000', '#808080', '#c0c0c0'].forEach(function (color) {
  var b = document.createElement('button');
  b.style.background = color;
  b.setAttribute('aria-label', 'Color ' + color);
  if (color === '#f00') b.className = 'on';
  document.getElementById('palette').appendChild(b);
});
```
